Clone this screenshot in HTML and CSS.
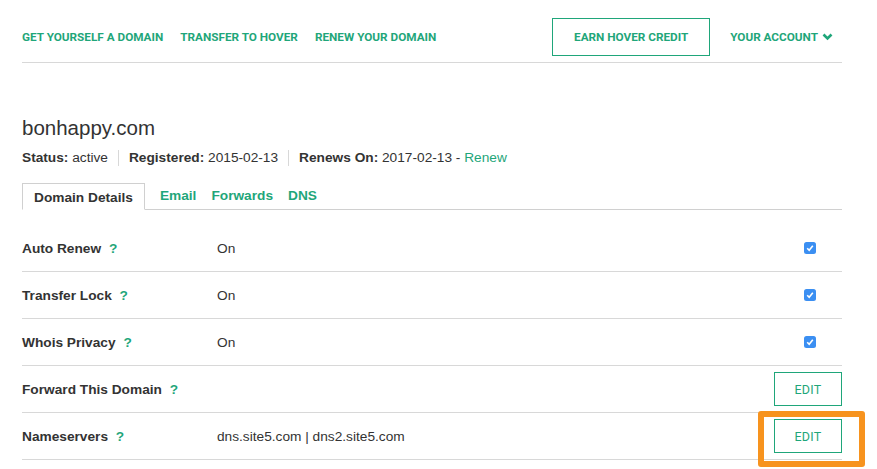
FILE: index.html
```html
<!DOCTYPE html>
<html>
<head>
<meta charset="utf-8">
<link rel="stylesheet" href="styles.css">
</head>
<body>
<div class="page">
  <nav class="nav">
    <a class="nav-link">GET YOURSELF A DOMAIN</a>
    <a class="nav-link">TRANSFER TO HOVER</a>
    <a class="nav-link">RENEW YOUR DOMAIN</a>
    <span class="nav-spacer"></span>
    <a class="nav-btn">EARN HOVER CREDIT</a>
    <a class="nav-link account">YOUR ACCOUNT
      <svg class="chev" width="11" height="8" viewBox="0 0 11 8"><path d="M1.5 1.5 L5.5 5.5 L9.5 1.5" fill="none" stroke="#1fa67a" stroke-width="2.6"/></svg>
    </a>
  </nav>

  <h1 class="title">bonhappy.com</h1>
  <div class="meta">
    <span class="meta-item"><b>Status:</b> active</span>
    <span class="meta-item"><b>Registered:</b> 2015-02-13</span>
    <span class="meta-item"><b>Renews On:</b> 2017-02-13 - <a class="green">Renew</a></span>
  </div>

  <div class="tabs">
    <span class="tab active">Domain Details</span>
    <a class="tab">Email</a>
    <a class="tab">Forwards</a>
    <a class="tab">DNS</a>
  </div>

  <div class="rows">
    <div class="row">
      <div class="label">Auto Renew <span class="q">?</span></div>
      <div class="value">On</div>
      <div class="ctrl"><span class="check"><svg width="12" height="12" viewBox="0 0 12 12"><path d="M3.2 6.2 L5.2 8.2 L8.8 3.8" fill="none" stroke="#fff" stroke-width="1.6"/></svg></span></div>
    </div>
    <div class="row">
      <div class="label">Transfer Lock <span class="q">?</span></div>
      <div class="value">On</div>
      <div class="ctrl"><span class="check"><svg width="12" height="12" viewBox="0 0 12 12"><path d="M3.2 6.2 L5.2 8.2 L8.8 3.8" fill="none" stroke="#fff" stroke-width="1.6"/></svg></span></div>
    </div>
    <div class="row">
      <div class="label">Whois Privacy <span class="q">?</span></div>
      <div class="value">On</div>
      <div class="ctrl"><span class="check"><svg width="12" height="12" viewBox="0 0 12 12"><path d="M3.2 6.2 L5.2 8.2 L8.8 3.8" fill="none" stroke="#fff" stroke-width="1.6"/></svg></span></div>
    </div>
    <div class="row">
      <div class="label">Forward This Domain <span class="q">?</span></div>
      <div class="value"></div>
      <div class="ctrl"><a class="edit">EDIT</a></div>
    </div>
    <div class="row">
      <div class="label">Nameservers <span class="q">?</span></div>
      <div class="value">dns.site5.com | dns2.site5.com</div>
      <div class="ctrl"><a class="edit">EDIT</a><span class="highlight"></span></div>
    </div>
  </div>
</div>
</body>
</html>
```

FILE: styles.css
```css
* { box-sizing: border-box; }
html, body { margin: 0; padding: 0; background: #fff; }
body {
  font-family: "Liberation Sans", Arial, sans-serif;
  color: #333;
  font-size: 13.7px;
}
.page {
  width: 820px;
  margin-left: 22px;
  padding-bottom: 12px;
}
.nav {
  display: flex;
  align-items: center;
  height: 63px;
  padding-top: 18px;
  padding-bottom: 7px;
  border-bottom: 1px solid #d8d8d8;
  font-family: Roboto, "Liberation Sans", sans-serif;
}
.nav-link, .nav-btn {
  font-weight: 700;
  font-size: 11.75px;
  color: #1fa67a;
  text-decoration: none;
}
.nav-link { margin-right: 17px; }
.nav-spacer { flex: 1; }
.nav-btn {
  display: flex;
  align-items: center;
  justify-content: center;
  width: 158px;
  height: 38px;
  border: 1.5px solid #1fa67a;
  margin-right: 20px;
}
.account {
  margin-right: 9px;
  display: flex;
  align-items: center;
  gap: 4px;
}
.chev { display: block; }

.title {
  font-weight: 400;
  font-size: 20.5px;
  margin: 53px 0 0;
  line-height: 24px;
  color: #333;
}
.meta {
  display: flex;
  margin-top: 10px;
  line-height: 16px;
}
.meta-item {
  padding: 0 10px;
  border-left: 1px solid #d8d8d8;
}
.meta-item:first-child { padding-left: 0; border-left: none; }
.green { color: #1fa67a; text-decoration: none; }

.tabs {
  display: flex;
  align-items: flex-end;
  margin-top: 17px;
  border-bottom: 1px solid #d0d0d0;
  height: 27px;
}
.tab {
  font-weight: 700;
  color: #1fa67a;
  margin-right: 15px;
  line-height: 26px;
}
.tab.active {
  color: #333;
  border: 1px solid #d0d0d0;
  border-bottom: 1px solid #fff;
  margin-bottom: -1px;
  padding: 0 11px;
  height: 27px;
  line-height: 28px;
}

.rows { margin-top: 15px; }
.row {
  display: flex;
  align-items: center;
  height: 47px;
  border-bottom: 1px solid #d8d8d8;
}
.label {
  width: 195px;
  font-weight: 700;
}
.q { color: #1fa67a; margin-left: 4px; }
.value { flex: 1; }
.ctrl {
  position: relative;
  display: flex;
  align-items: center;
}
.check {
  display: block;
  width: 12px;
  height: 12px;
  border-radius: 2.5px;
  background: #3b8ff2;
  margin-right: 26px;
}
.check svg { display: block; }
.edit {
  display: flex;
  align-items: center;
  justify-content: center;
  width: 68px;
  height: 34px;
  border: 1.5px solid #1fa67a;
  color: #1fa67a;
  font-family: Roboto, "Liberation Sans", sans-serif;
  font-size: 12.5px;
  letter-spacing: 0.3px;
}
.highlight {
  position: absolute;
  left: -16px;
  top: -8px;
  width: 107px;
  height: 56px;
  border: 6px solid #f7931e;
  border-radius: 3px;
}
```
